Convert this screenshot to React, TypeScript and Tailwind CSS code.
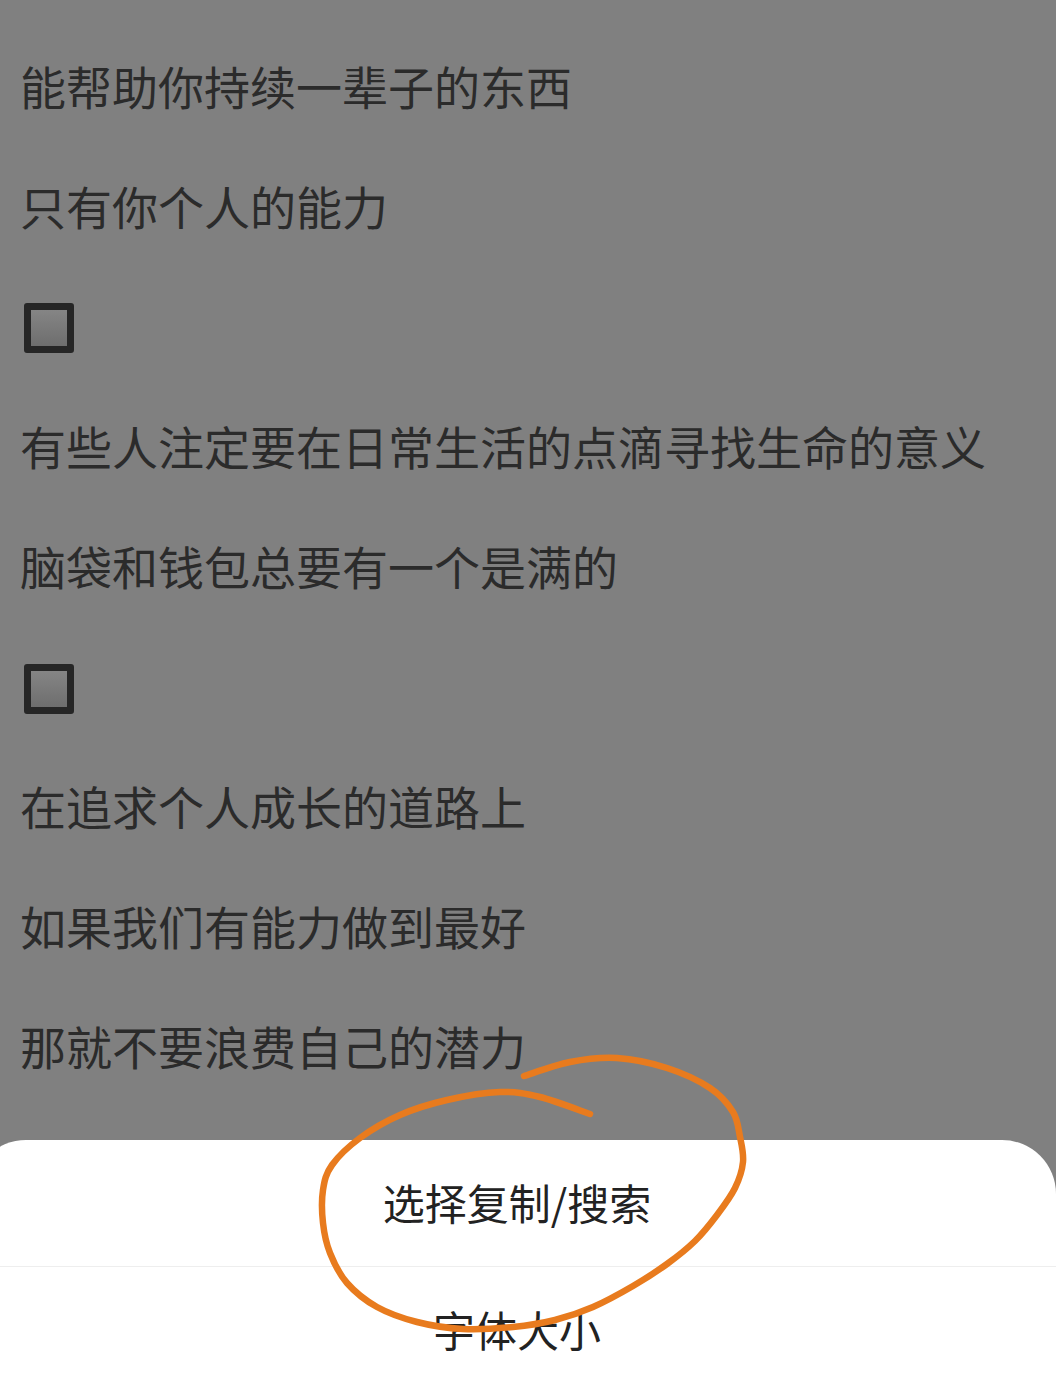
const lines: (string | null)[] = [
  "能帮助你持续一辈子的东西",
  "只有你个人的能力",
  null,
  "有些人注定要在日常生活的点滴寻找生命的意义",
  "脑袋和钱包总要有一个是满的",
  null,
  "在追求个人成长的道路上",
  "如果我们有能力做到最好",
  "那就不要浪费自己的潜力",
];

const pts: [number, number][] = [
  [524, 1076], [570, 1062], [617, 1058], [667, 1068], [710, 1088], [733, 1112], [740, 1137],
  [743, 1162], [735, 1188], [717, 1215], [695, 1241], [667, 1264], [633, 1286], [593, 1307],
  [555, 1320], [513, 1327], [463, 1329], [417, 1322], [377, 1307], [347, 1283], [330, 1253],
  [323, 1223], [323, 1190], [332, 1165], [360, 1138], [400, 1115], [447, 1100], [500, 1092],
  [540, 1097], [590, 1114],
];

function smooth(p: [number, number][]) {
  let d = `M${p[0][0]} ${p[0][1]}`;
  for (let i = 0; i < p.length - 1; i++) {
    const a = p[Math.max(i - 1, 0)];
    const b = p[i];
    const c = p[i + 1];
    const e = p[Math.min(i + 2, p.length - 1)];
    d += ` C${b[0] + (c[0] - a[0]) / 6} ${b[1] + (c[1] - a[1]) / 6} ${c[0] - (e[0] - b[0]) / 6} ${c[1] - (e[1] - b[1]) / 6} ${c[0]} ${c[1]}`;
  }
  return d;
}

export default function App() {
  return (
    <div
      className="relative flex h-[1378px] w-[1056px] flex-col overflow-hidden bg-[#808080]"
      style={{ fontFamily: '"Noto Sans CJK SC", "Noto Sans", sans-serif' }}
    >
      <div className="flex flex-col pt-[25px] pl-[20px]">
        {lines.map((t, i) => (
          <div key={i} className="flex h-[120px] items-center text-[46px] leading-none text-[#2b2b2b]">
            {t ?? (
              <div
                className={
                  i === 5
                    ? "mt-[8px] ml-[4px] h-[50px] w-[50px] rounded-[3px] border-[7px] border-[#262626] bg-gradient-to-b from-[#858585] to-[#6e6e6e]"
                    : "mt-[6px] ml-[4px] h-[50px] w-[50px] rounded-[3px] border-[7px] border-[#262626] bg-gradient-to-b from-[#858585] to-[#6e6e6e]"
                }
              />
            )}
          </div>
        ))}
      </div>
      <div className="mt-[35px] ml-[-28px] flex flex-1 flex-col rounded-t-[54px] bg-white text-[42px] leading-none text-[#222222]">
        <div className="flex h-[127px] items-center justify-center border-b border-[#eeeeee] pb-[2px] pl-[6px]">
          选择复制/搜索
        </div>
        <div className="flex h-[127px] items-center justify-center pb-[4px] pl-[6px]">字体大小</div>
      </div>
      <svg className="absolute top-0 left-0" width="1056" height="1378" fill="none">
        <path d={smooth(pts)} stroke="#e87b1e" strokeWidth="6.5" strokeLinecap="round" strokeLinejoin="round" />
      </svg>
    </div>
  );
}
